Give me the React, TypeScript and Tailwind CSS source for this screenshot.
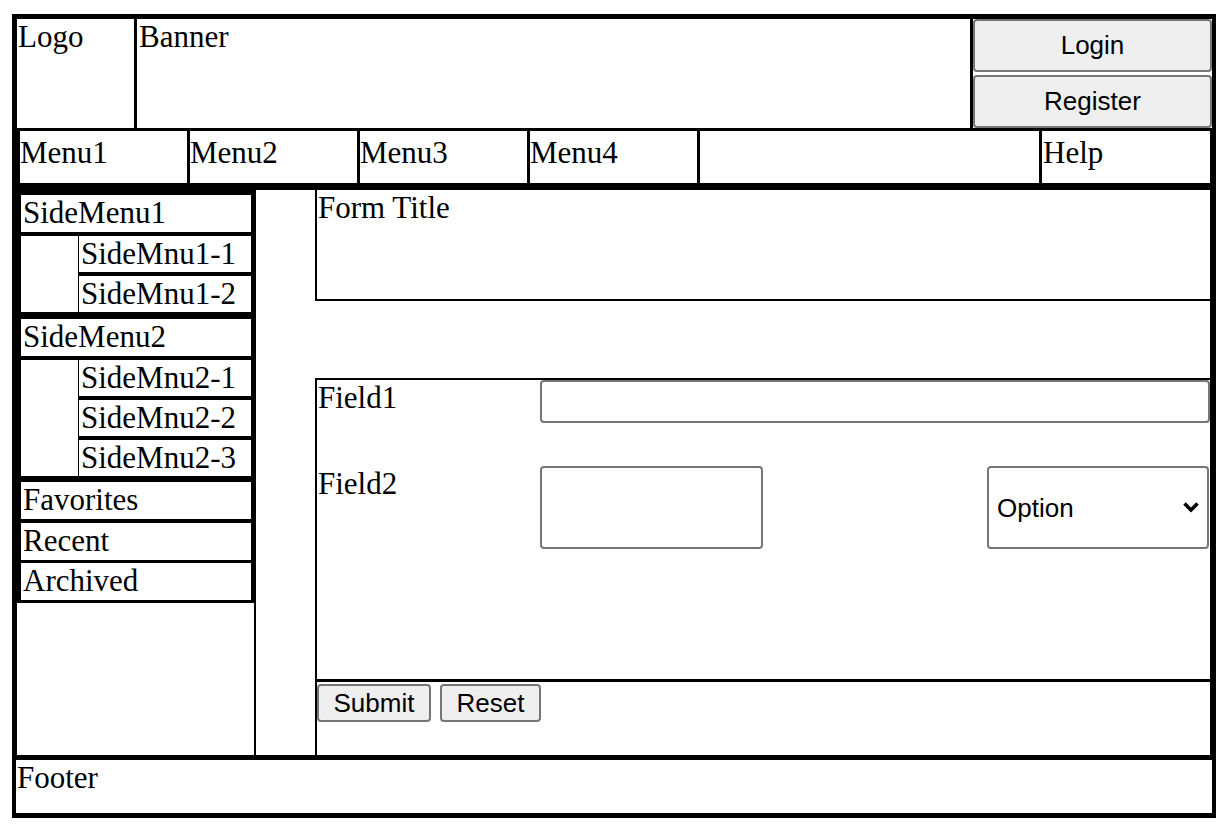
import { ChangeEvent, useState } from "react";

const menus = ["Menu1", "Menu2", "Menu3", "Menu4"];

const sideGroups = [
  { title: "SideMenu1", subs: ["SideMnu1-1", "SideMnu1-2"] },
  { title: "SideMenu2", subs: ["SideMnu2-1", "SideMnu2-2", "SideMnu2-3"] },
];

const sans = "font-['Liberation_Sans',Arial,sans-serif] text-[26px] leading-[normal]";

const Header = () => (
  <div className="ml-[5px] mr-[4px] h-[109px] flex gap-[3px]">
    <div className="w-[117px] bg-white pl-[1px]">Logo</div>
    <div className="flex-1 bg-white pl-[2px]">Banner</div>
    <div className="w-[239px] bg-white flex flex-col gap-[3px]">
      <button className={`h-[53px] rounded-[4px] border-2 border-[#767676] bg-[#efefef] ${sans}`}>
        Login
      </button>
      <button className={`h-[53px] rounded-[4px] border-2 border-[#767676] bg-[#efefef] ${sans}`}>
        Register
      </button>
    </div>
  </div>
);

const MenuBar = () => (
  <div className="mt-[3px] ml-[8px] mr-[6px] h-[52px] flex gap-[3px]">
    {menus.map((m) => (
      <div key={m} className="w-[167px] bg-white pt-[4px]">
        {m}
      </div>
    ))}
    <div className="flex-1 bg-white" />
    <div className="w-[168px] bg-white pt-[4px] pl-[1px]">Help</div>
  </div>
);

const Sidebar = () => (
  <div className="w-[237px] bg-white flex flex-col">
    {/* menu part sits on black, the gaps read as borders */}
    <div className="bg-black pt-[5px] pb-[3px] pl-[4px] pr-[3px] flex flex-col">
      {sideGroups.map((g, i) => (
        <div key={g.title} className={i === 0 ? "flex flex-col" : "flex flex-col mt-[7px]"}>
          <div className="h-[37px] bg-white pl-[2px] whitespace-nowrap">{g.title}</div>
          <div className="mt-[4px] flex gap-[1px]">
            <div className="w-[57px] bg-white" />
            <div className="flex-1 flex flex-col gap-[4px]">
              {g.subs.map((s) => (
                <div key={s} className="h-[36px] bg-white pl-[2px] whitespace-nowrap">
                  {s}
                </div>
              ))}
            </div>
          </div>
        </div>
      ))}
      <div className="mt-[6px] h-[37px] bg-white pl-[2px]">Favorites</div>
      <div className="mt-[4px] h-[37px] bg-white pl-[2px]">Recent</div>
      <div className="mt-[3px] h-[37px] bg-white pl-[2px]">Archived</div>
    </div>
    <div className="flex-1 bg-white" />
  </div>
);

const FormPanel = () => {
  const [opt, setOpt] = useState("Option");
  return (
    <div className="flex-1 bg-white flex flex-col">
      <div className="h-[111px] border-l-2 border-b-2 border-black pl-[1px]">Form Title</div>
      <div className="h-[77px]" />
      <div className="flex-1 border-l-2 border-t-2 border-black flex flex-col">
        <div className="h-[302px] border-b-[3px] border-black flex flex-col">
          <div className="h-[43px] flex">
            <div className="w-[223px] pl-[1px]">Field1</div>
            <input className="flex-1 h-[43px] rounded-[4px] border-2 border-[#767676] bg-white outline-none" />
          </div>
          <div className="mt-[43px] flex">
            <div className="w-[223px] pl-[1px]">Field2</div>
            <textarea className="w-[223px] h-[83px] rounded-[4px] border-2 border-[#767676] bg-white resize-none outline-none" />
            <div className="flex-1" />
            <div className="relative w-[222px] h-[83px] mr-[1px]">
              <select
                value={opt}
                onChange={(e: ChangeEvent<HTMLSelectElement>) => setOpt(e.target.value)}
                className={`w-full h-full appearance-none rounded-[4px] border-2 border-[#767676] bg-white pl-[8px] text-black outline-none ${sans}`}
              >
                <option>Option</option>
              </select>
              <svg
                className="absolute right-[9px] top-[35px] pointer-events-none"
                width="18"
                height="12"
                viewBox="0 0 18 12"
              >
                <polyline points="2.5,2.5 9,9 15.5,2.5" fill="none" stroke="black" strokeWidth="3.6" />
              </svg>
            </div>
          </div>
        </div>
        <div className="flex-1 pt-[2px] flex items-start gap-[9px]">
          <button className={`w-[114px] h-[38px] rounded-[4px] border-2 border-[#767676] bg-[#efefef] ${sans}`}>
            Submit
          </button>
          <button className={`w-[101px] h-[38px] rounded-[4px] border-2 border-[#767676] bg-[#efefef] ${sans}`}>
            Reset
          </button>
        </div>
      </div>
    </div>
  );
};

export default function App() {
  return (
    <div className="min-h-screen bg-white pl-[12px] pt-[14px] text-black font-['Liberation_Serif','Times_New_Roman',serif] text-[31px] leading-[normal]">
      <div className="w-[1204px] bg-black pt-[5px] pb-[5px] flex flex-col">
        <Header />
        <MenuBar />
        <div className="mt-[7px] ml-[5px] mr-[6px] h-[565px] flex gap-[2px]">
          <Sidebar />
          <div className="flex-1 bg-white flex">
            <div className="w-[59px]" />
            <FormPanel />
          </div>
        </div>
        <div className="mt-[5px] mx-[4px] h-[53px] bg-white pl-[1px]">Footer</div>
      </div>
    </div>
  );
}
